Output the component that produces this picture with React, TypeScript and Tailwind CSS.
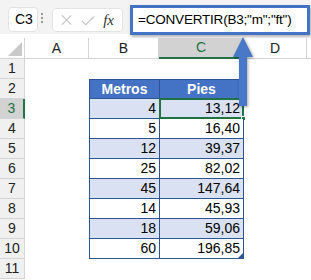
import React from "react";

const rows: { b: string; c: string }[] = [
  { b: "4", c: "13,12" },
  { b: "5", c: "16,40" },
  { b: "12", c: "39,37" },
  { b: "25", c: "82,02" },
  { b: "45", c: "147,64" },
  { b: "14", c: "45,93" },
  { b: "18", c: "59,06" },
  { b: "60", c: "196,85" },
];

const font = { fontFamily: '"Liberation Sans", Arial, sans-serif' };

function RowHead({ n, active }: { n: number; active?: boolean }) {
  return (
    <div
      className={
        active
          ? "flex h-[20px] items-center justify-center border-b border-r-2 border-b-[#d4d4d4] border-r-[#217346] bg-[#d2d2d2] text-[14px] text-[#217346]"
          : "flex h-[20px] items-center justify-center border-b border-r border-[#d4d4d4] bg-[#f0f0f0] text-[14px] text-[#222]"
      }
    >
      {n}
    </div>
  );
}

export default function App() {
  return (
    <div className="relative h-[280px] w-[311px] overflow-hidden bg-white" style={font}>
      {/* Formula bar */}
      <div className="flex h-[34px] items-start bg-[#f3f3f3]">
        <div className="ml-[8px] mt-[7px] flex h-[25px] w-[30px] items-center rounded-[4px] border border-[#e3e3e3] bg-white pl-[6px] text-[14px] text-black">
          C3
        </div>
        <div className="ml-[2px] mt-[13px] flex w-[4px] flex-col items-center gap-[2px]">
          <span className="h-[2px] w-[2px] bg-[#9a9a9a]" />
          <span className="h-[2px] w-[2px] bg-[#9a9a9a]" />
          <span className="h-[2px] w-[2px] bg-[#9a9a9a]" />
        </div>
        <div className="ml-[8px] mt-[8px] flex h-[24px] w-[71px] items-center rounded-[4px] border border-[#e3e3e3] bg-white px-[8px]">
          <svg width="12" height="12" viewBox="0 0 12 12" className="mr-[9px]">
            <path d="M1 1 L11 11 M11 1 L1 11" stroke="#c4c4c4" strokeWidth="1.2" fill="none" />
          </svg>
          <svg width="15" height="11" viewBox="0 0 15 11" className="mr-[8px]">
            <path d="M1 6 L5 10 L14 1" stroke="#c4c4c4" strokeWidth="1.2" fill="none" />
          </svg>
          <span
            className="text-[15px] italic leading-none text-[#333]"
            style={{ fontFamily: '"Liberation Serif", "Times New Roman", serif' }}
          >
            fx
          </span>
        </div>
        <div className="ml-[7px] mt-[5px] flex h-[30px] w-[180px] items-center border-[3px] border-[#4472c4] bg-white pl-[5px] text-[13.5px] tracking-[-0.2px] text-black shadow-[1px_2px_3px_rgba(0,0,0,0.3)]">
          =CONVERTIR(B3;"m";"ft")
        </div>
      </div>

      {/* Sheet */}
      <div className="mt-[4px] grid grid-cols-[25px_64px_70px_85px_63px_4px] text-[14px]">
        {/* column header row */}
        <div className="relative h-[21px] border-b border-r border-[#d4d4d4] bg-white">
          <svg width="14" height="14" viewBox="0 0 14 14" className="absolute bottom-[2px] right-[2px]">
            <path d="M14 0 L14 14 L0 14 Z" fill="#c9c9c9" />
          </svg>
        </div>
        <div className="flex h-[21px] items-center justify-center border-b border-r border-[#d4d4d4] bg-white text-[#222]">A</div>
        <div className="flex h-[21px] items-center justify-center border-b border-r border-[#d4d4d4] bg-white text-[#222]">B</div>
        <div className="flex h-[21px] items-center justify-center border-b-2 border-r border-b-[#217346] border-r-[#c4c4c4] bg-[#d2d2d2] text-[#217346]">C</div>
        <div className="flex h-[21px] items-center justify-center border-b border-r border-[#d4d4d4] bg-white text-[#222]">D</div>
        <div className="h-[21px] border-b border-[#d4d4d4] bg-white" />

        {/* row 1 */}
        <RowHead n={1} />
        <div className="col-span-5 h-[20px]" />

        {/* row 2 – table header */}
        <RowHead n={2} />
        <div className="h-[20px]" />
        <div className="flex h-[20px] items-center justify-center border border-r-0 border-[#2f5496] bg-[#4472c4] font-bold text-white">
          Metros
        </div>
        <div className="flex h-[20px] items-center justify-center border border-[#2f5496] bg-[#4472c4] font-bold text-white">
          Pies
        </div>
        <div className="col-span-2 h-[20px]" />

        {rows.map((r, i) => {
          const band = i % 2 === 0 ? "bg-[#d9e1f2]" : "bg-white";
          return (
            <React.Fragment key={i}>
              <RowHead n={i + 3} active={i === 0} />
              <div className="h-[20px]" />
              <div className={`flex h-[20px] items-center justify-end border-b border-l border-[#2f5496] pr-[3px] text-black ${band}`}>
                {r.b}
              </div>
              <div className={`relative flex h-[20px] items-center justify-end border-b border-l border-r border-[#2f5496] pr-[3px] text-black ${band}`}>
                {r.c}
                {i === 0 && (
                  <>
                    <div className="absolute -left-[1px] -right-[1px] -top-[1px] -bottom-[1px] border-2 border-[#217346]" />
                    <div className="absolute -bottom-[3px] -right-[3px] h-[5px] w-[5px] border border-white bg-[#217346]" />
                  </>
                )}
                {i === rows.length - 1 && (
                  <svg width="5" height="5" viewBox="0 0 5 5" className="absolute bottom-0 right-0">
                    <path d="M5 0 L5 5 L0 5 Z" fill="#2f5496" />
                  </svg>
                )}
              </div>
              <div className="col-span-2 h-[20px]" />
            </React.Fragment>
          );
        })}

        <RowHead n={11} />
        <div className="col-span-5 h-[20px]" />
      </div>

      {/* Callout arrow */}
      <svg
        width="30"
        height="80"
        viewBox="0 0 30 80"
        className="absolute left-[230px] top-[35px]"
        style={{ filter: "drop-shadow(1px 1px 1.5px rgba(0,0,0,0.35))" }}
      >
        <path d="M13 2 L23 22 L17 22 L17 71 L9 71 L9 22 L3 22 Z" fill="#4a78c8" />
      </svg>
    </div>
  );
}
